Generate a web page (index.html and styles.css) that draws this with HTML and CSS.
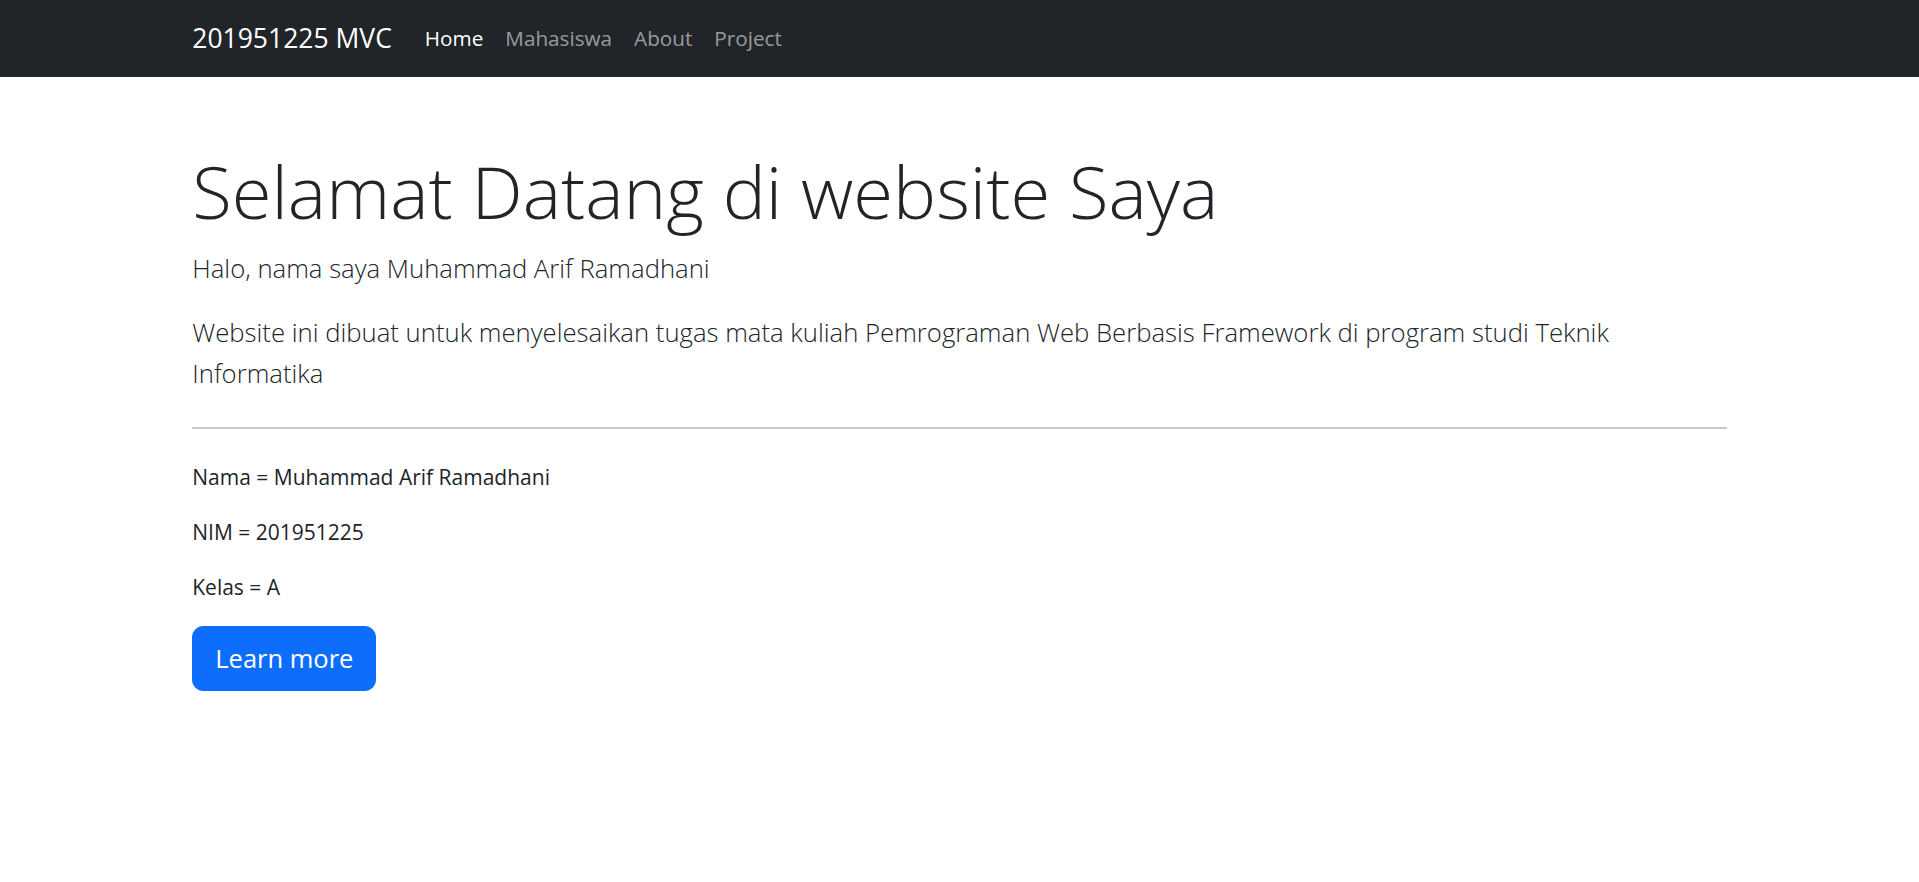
FILE: index.html
```html
<!DOCTYPE html>
<html lang="id">
<head>
<meta charset="utf-8">
<title>201951225 MVC</title>
<link rel="stylesheet" href="styles.css">
</head>
<body>
<nav class="navbar">
  <div class="container nav-inner">
    <a class="brand" href="#">201951225 MVC</a>
    <ul class="nav-links">
      <li><a class="nav-link active" href="#">Home</a></li>
      <li><a class="nav-link" href="#">Mahasiswa</a></li>
      <li><a class="nav-link" href="#">About</a></li>
      <li><a class="nav-link" href="#">Project</a></li>
    </ul>
  </div>
</nav>
<main class="container hero">
  <h1 class="display">Selamat Datang di website Saya</h1>
  <p class="lead">Halo, nama saya Muhammad Arif Ramadhani</p>
  <p class="lead">Website ini dibuat untuk menyelesaikan tugas mata kuliah Pemrograman Web Berbasis Framework di program studi Teknik Informatika</p>
  <hr class="divider">
  <p class="info">Nama = Muhammad Arif Ramadhani</p>
  <p class="info">NIM = 201951225</p>
  <p class="info">Kelas = A</p>
  <a class="btn" href="#">Learn more</a>
</main>
</body>
</html>
```
FILE: styles.css
```css
* { box-sizing: border-box; }
html, body { margin: 0; padding: 0; }
body {
  font-family: "Open Sans", "Noto Sans", sans-serif;
  font-size: 21px;
  line-height: 33px;
  color: #212529;
  background: #fff;
}
.container {
  width: 100%;
  max-width: 1567.5px;
  margin: 0 auto;
  padding: 0 16.5px;
}
.navbar {
  background: #212529;
  padding: 11px 0;
}
.nav-inner {
  display: flex;
  align-items: center;
}
.brand {
  font-size: 26.5px;
  line-height: 41.25px;
  padding: 6.875px 0;
  margin-right: 22px;
  color: #fff;
  text-decoration: none;
  white-space: nowrap;
}
.nav-links {
  display: flex;
  list-style: none;
  margin: 0;
  padding: 0;
}
.nav-link {
  display: block;
  padding: 11px;
  font-size: 20.7px;
  line-height: 33px;
  color: rgba(255,255,255,0.55);
  text-decoration: none;
}
.nav-link.active { color: #fff; }
.hero {
  padding-top: 68px;
}
.display {
  font-size: 72.4px;
  font-weight: 300;
  line-height: 92.4px;
  margin: 0 0 11px;
}
.lead {
  font-size: 25.7px;
  font-weight: 300;
  line-height: 41.25px;
  margin: 0 0 22px;
}
.divider {
  margin: 33px 0 32px;
  border: 0;
  border-top: 2px solid #c8c9ca;
}
.info {
  margin: 0 0 22px;
}
.btn {
  display: inline-block;
  padding: 11px 22px;
  font-size: 25.5px;
  line-height: 41.25px;
  color: #fff;
  background: #0d6efd;
  border: 1.375px solid #0d6efd;
  border-radius: 11px;
  text-decoration: none;
}
```
